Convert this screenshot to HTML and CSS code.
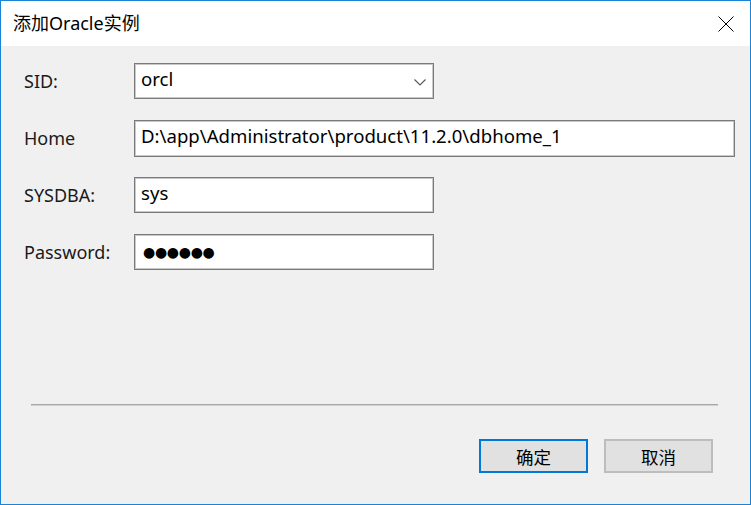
FILE: index.html
```html
<!DOCTYPE html>
<html lang="zh-CN">
<head>
<meta charset="utf-8">
<title>添加Oracle实例</title>
<link rel="stylesheet" href="styles.css">
</head>
<body>
<div class="window">
  <div class="titlebar">
    <span class="title">添加Oracle实例</span>
    <span class="close">
      <svg width="16" height="16" viewBox="0 0 16 16"><path d="M0.5 0.5 L15.5 15.5 M15.5 0.5 L0.5 15.5" stroke="#000" stroke-width="1" fill="none"/></svg>
    </span>
  </div>
  <div class="body">
    <div class="form">
      <label class="label">SID:</label>
      <div class="field short combo">
        <span class="value">orcl</span>
        <svg class="arrow" width="12" height="7" viewBox="0 0 12 7"><path d="M0.5 0.5 L6 6 L11.5 0.5" stroke="#5a5a5a" stroke-width="1.2" fill="none"/></svg>
      </div>
      <label class="label">Home</label>
      <div class="field long"><span class="value">D:\app\Administrator\product\11.2.0\dbhome_1</span></div>
      <label class="label">SYSDBA:</label>
      <div class="field short"><span class="value">sys</span></div>
      <label class="label">Password:</label>
      <div class="field short"><span class="value dots">●●●●●●</span></div>
    </div>
    <div class="separator"></div>
    <div class="buttons">
      <button class="btn primary">确定</button>
      <button class="btn">取消</button>
    </div>
  </div>
</div>
</body>
</html>
```
FILE: styles.css
```css
html, body {
  margin: 0;
  padding: 0;
  background: #f0f0f0;
}
.window {
  width: 751px;
  height: 505px;
  box-sizing: border-box;
  border: 1px solid #1883d7;
  display: flex;
  flex-direction: column;
  font-family: "Noto Sans", "Noto Sans CJK SC", sans-serif;
  color: #000;
}
.titlebar {
  height: 45px;
  background: #fff;
  display: flex;
  align-items: center;
  padding-left: 12px;
}
.title {
  font-size: 18px;
  line-height: 1;
  margin-top: -1px;
}
.close {
  margin-left: auto;
  margin-right: 16px;
  display: flex;
}
.body {
  flex: 1;
  background: #f0f0f0;
  padding: 17px 0 0 23px;
  display: flex;
  flex-direction: column;
}
.form {
  display: grid;
  grid-template-columns: 110px auto;
  grid-auto-rows: 36px;
  row-gap: 21px;
  align-items: center;
}
.label {
  font-size: 18px;
  color: #1a1a1a;
}
.field {
  height: 36px;
  box-sizing: border-box;
  border: 1px solid #7a7a7a;
  box-shadow: inset 0 0 0 1px #c9c9c9;
  background: #fff;
  display: flex;
  align-items: center;
  padding-left: 6px;
  position: relative;
}
.field.short { width: 300px; }
.field.long { width: 601px; height: 37px; }
.value {
  font-size: 18.6px;
  line-height: 1;
  margin-top: -3px;
}
.combo .arrow {
  position: absolute;
  right: 7px;
  top: 15px;
}
.dots {
  font-family: "DejaVu Sans", sans-serif;
  font-size: 14px;
  letter-spacing: -0.3px;
  margin-left: 2px;
  margin-top: 0;
}
.separator {
  margin: 134px 0 0 7px;
  width: 687px;
  height: 1px;
  background: #a8a8a8;
  border-bottom: 1px solid #cfcfcf;
}
.buttons {
  display: flex;
  justify-content: flex-end;
  gap: 16px;
  margin-top: 33px;
  padding-right: 37px;
}
.btn {
  width: 109px;
  height: 34px;
  box-sizing: border-box;
  background: #e1e1e1;
  border: 2px solid #bdbdbd;
  font-family: "Noto Sans CJK SC", sans-serif;
  font-size: 17.5px;
  color: #000;
  padding: 0;
  display: flex;
  align-items: center;
  justify-content: center;
}
.btn.primary {
  border-color: #0078d7;
}
```
